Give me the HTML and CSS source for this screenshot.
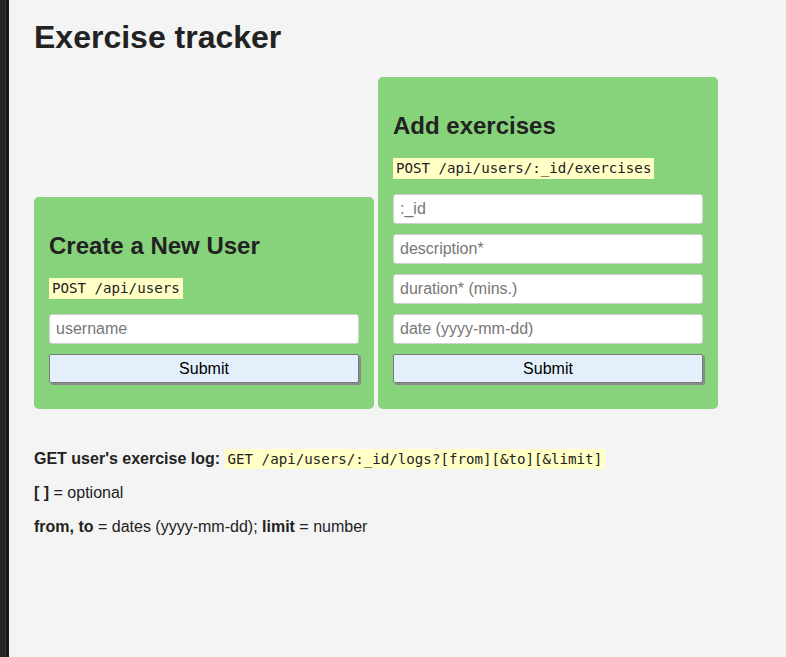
FILE: index.html
```html
<!DOCTYPE html>
<html lang="en">
<head>
<meta charset="utf-8">
<title>Exercise Tracker</title>
<link rel="stylesheet" href="styles.css">
</head>
<body>
<div class="sidebar"></div>
<main class="main">
  <h1 class="title">Exercise tracker</h1>
  <div class="cards">
    <form class="card">
      <h2 class="card-title">Create a New User</h2>
      <div class="endpoint"><code class="code">POST /api/users</code></div>
      <input class="field" type="text" placeholder="username">
      <button class="submit" type="button">Submit</button>
    </form>
    <form class="card">
      <h2 class="card-title">Add exercises</h2>
      <div class="endpoint"><code class="code">POST /api/users/:_id/exercises</code></div>
      <input class="field" type="text" placeholder=":_id">
      <input class="field" type="text" placeholder="description*">
      <input class="field" type="text" placeholder="duration* (mins.)">
      <input class="field" type="text" placeholder="date (yyyy-mm-dd)">
      <button class="submit" type="button">Submit</button>
    </form>
  </div>
  <p class="note"><strong>GET user's exercise log:</strong> <code class="code">GET /api/users/:_id/logs?[from][&amp;to][&amp;limit]</code></p>
  <p class="note"><strong>[ ]</strong> = optional</p>
  <p class="note"><strong>from, to</strong> = dates (yyyy-mm-dd); <strong>limit</strong> = number</p>
</main>
</body>
</html>
```
FILE: styles.css
```css
html, body {
  margin: 0;
  padding: 0;
  height: 100%;
}
body {
  display: flex;
  background: #f4f4f4;
  color: #222;
  font-family: "Liberation Sans", Arial, sans-serif;
  font-size: 16px;
}
.sidebar {
  width: 9px;
  flex: none;
  background: linear-gradient(to right, #242424 0, #242424 5px, #333 5px, #333 6px, #17171d 6px, #17171d 9px);
}
.main {
  flex: 1;
  padding: 0 25px;
}
.title {
  font-size: 32px;
  font-weight: bold;
  margin: 19px 0 21px;
  line-height: normal;
}
.cards {
  display: flex;
  align-items: flex-end;
  gap: 4px;
  margin-bottom: 41px;
}
.card {
  width: 340px;
  box-sizing: border-box;
  padding: 15px;
  background: #87d37c;
  border-radius: 5px;
  display: flex;
  flex-direction: column;
  align-items: stretch;
}
.card-title {
  font-size: 24px;
  font-weight: bold;
  margin: 20px 0 18px;
  line-height: normal;
}
.endpoint {
  margin-bottom: 15px;
}
.code {
  display: inline-block;
  font-family: "DejaVu Sans Mono", "Liberation Mono", monospace;
  font-size: 14.15px;
  line-height: 17px;
  padding: 2px 3px;
  background: #ffffc6;
  color: #222;
}
.note .code {
  display: inline;
  padding: 2px 3px;
}
.field {
  height: 30px;
  box-sizing: border-box;
  margin: 0 0 10px;
  padding: 0 6px;
  border: 1px solid #d0d0d0;
  border-radius: 3px;
  background: #fff;
  font-family: "Liberation Sans", Arial, sans-serif;
  font-size: 16px;
  color: #222;
}
.field::placeholder {
  color: #777;
}
.submit {
  height: 29px;
  margin: 0 0 11px 0;
  box-sizing: border-box;
  border: 1px solid #7a7a7a;
  border-radius: 2px;
  background: #e3f0fc;
  box-shadow: 2px 2px 0 #8a8a8a;
  font-family: "Liberation Sans", Arial, sans-serif;
  font-size: 16px;
  color: #000;
  padding: 0;
}
.note {
  margin: 16px 0;
  line-height: normal;
}
```
